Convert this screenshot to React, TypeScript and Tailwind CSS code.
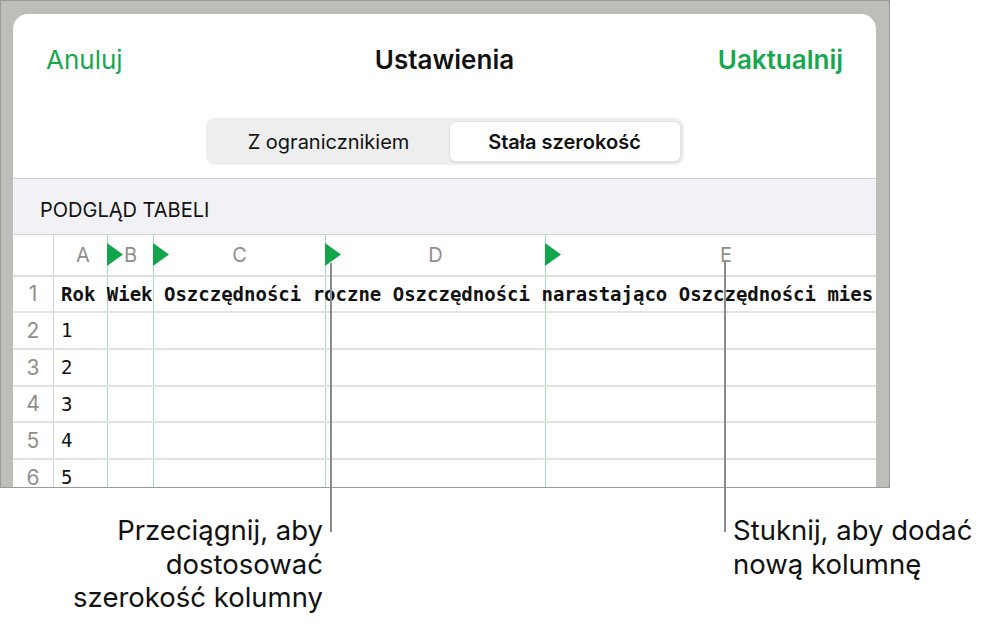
import React from 'react';

const GREEN = 'text-[#17a84f]';

const columns = [
  { key: 'A', width: 'w-[54px]', label: 'A', flag: false, line: 'border-r border-[#a6dcbd]' },
  { key: 'B', width: 'w-[46px]', label: 'B', flag: true, line: 'border-r border-[#a6dcbd]' },
  { key: 'C', width: 'w-[172px]', label: 'C', flag: true, line: 'border-r border-[#a6dcbd]' },
  { key: 'D', width: 'w-[220px]', label: 'D', flag: true, line: 'border-r border-[#a6dcbd]' },
  { key: 'E', width: 'w-[360px]', label: 'E', flag: true, line: '' },
];

const rows = [
  { n: 1, h: 'h-[36px]', text: 'Rok Wiek Oszczędności roczne Oszczędności narastająco Oszczędności mies', bold: true },
  { n: 2, h: 'h-[37px]', text: '1', bold: false },
  { n: 3, h: 'h-[37px]', text: '2', bold: false },
  { n: 4, h: 'h-[36px]', text: '3', bold: false },
  { n: 5, h: 'h-[37px]', text: '4', bold: false },
  { n: 6, h: 'h-[37px]', text: '5', bold: false },
];

const Flag = () => (
  <svg className="absolute left-[-1px] top-[8px]" width="16" height="23" viewBox="0 0 16 23">
    <path d="M0 0 L16 11.5 L0 23 Z" fill="#12a64c" />
  </svg>
);

export default function App() {
  return (
    <div className="w-[990px] h-[625px] bg-white relative overflow-hidden font-['Inter','Liberation_Sans',sans-serif] text-[#111]">
      {/* device frame */}
      <div className="w-[890px] h-[488px] border border-[#9a9b98] bg-[#bdbeba] pt-[13px] pl-[12px] pr-[13px] flex flex-col">
        <div className="flex-1 bg-white rounded-t-[15px] overflow-hidden">
          {/* nav bar */}
          <div className="h-[90px] px-[33px] grid grid-cols-[1fr_auto_1fr] items-center">
            <span className={`text-[26px] ${GREEN}`}>Anuluj</span>
            <span className="text-[26px] font-semibold">Ustawienia</span>
            <span className={`text-[26px] font-semibold justify-self-end ${GREEN}`}>Uaktualnij</span>
          </div>

          {/* segmented control */}
          <div className="flex justify-center mt-[14px] mb-[13px]">
            <div className="w-[478px] h-[47px] bg-[#eeeeef] rounded-[9px] p-[3px] flex">
              <div className="flex-1 flex items-center justify-center text-[20px]">Z ogranicznikiem</div>
              <div className="w-[232px] bg-white rounded-[7px] border border-[#e0e0e0] shadow-[0_1px_2px_rgba(0,0,0,0.08)] flex items-center justify-center text-[20px] font-semibold">
                Stała szerokość
              </div>
            </div>
          </div>

          {/* section header */}
          <div className="h-[57px] border-y border-[#d0d0d4] bg-[#f2f2f6] flex items-center pl-[27px] pt-[6px] text-[20px]">
            PODGLĄD TABELI
          </div>

          {/* table header */}
          <div className="flex h-[42px] border-b-2 border-[#dedede] text-[20px] text-[#8e8e8e]">
            <div className="w-[41px] shrink-0 border-r border-[#d4d4d4]" />
            {columns.map((c) => (
              <div key={c.key} className={`${c.width} shrink-0 relative flex items-center justify-center ${c.line}`}>
                {c.flag && <Flag />}
                <span className={c.key === 'A' ? 'pl-[5px]' : ''}>{c.label}</span>
              </div>
            ))}
          </div>

          {/* rows */}
          {rows.map((r) => (
            <div key={r.n} className={`flex ${r.h} border-b-2 border-[#e2e2e2]`}>
              <div className="w-[41px] shrink-0 border-r border-[#d4d4d4] flex items-center justify-center text-[21px] text-[#8e8e8e]">
                {r.n}
              </div>
              <div className="w-[54px] shrink-0 relative flex items-center border-r border-[#a6dcbd]">
                <span
                  className={`pl-[7px] whitespace-nowrap text-[19px] font-['DejaVu_Sans_Mono','Liberation_Mono',monospace] ${
                    r.bold ? 'font-bold' : ''
                  }`}
                >
                  {r.text}
                </span>
              </div>
              <div className="w-[46px] shrink-0 border-r border-[#a6dcbd]" />
              <div className="w-[172px] shrink-0 border-r border-[#a6dcbd]" />
              <div className="w-[220px] shrink-0 border-r border-[#a6dcbd]" />
              <div className="flex-1" />
            </div>
          ))}
        </div>
      </div>

      {/* callout leader lines */}
      <div className="absolute left-[330px] top-[263px] w-[2px] h-[269px] bg-[#8b8b8b]" />
      <div className="absolute left-[724px] top-[262px] w-[2px] h-[270px] bg-[#8b8b8b]" />

      {/* callout texts */}
      <div className="flex pt-[26px] text-[27.5px] leading-[33.5px]">
        <div className="w-[323px] text-right">
          Przeciągnij, aby
          <br />
          dostosować
          <br />
          szerokość kolumny
        </div>
        <div className="ml-[410px]">
          Stuknij, aby dodać
          <br />
          nową kolumnę
        </div>
      </div>
    </div>
  );
}
